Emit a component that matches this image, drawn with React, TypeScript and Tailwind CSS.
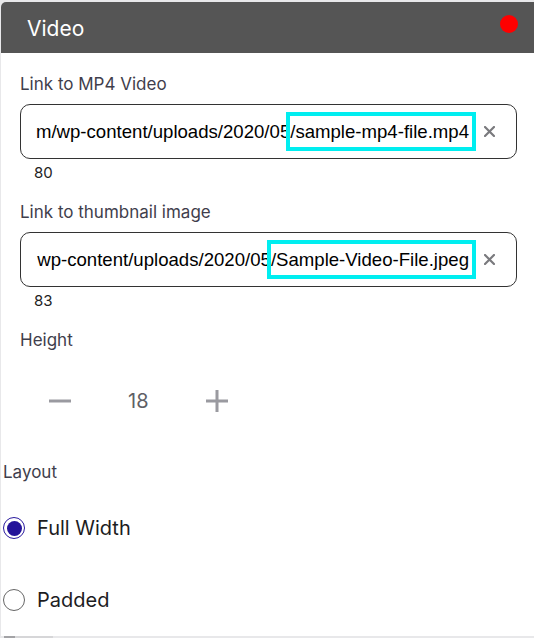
const ui = "font-['Inter','Noto_Sans',sans-serif]";
const mono = "font-['Liberation_Sans','Arial',sans-serif]";

function UrlField({ head, tail, count }: { head: string; tail: string; count: string }) {
  return (
    <>
      <div className="mt-[10px] h-[55px] border border-[#333] rounded-[10px] flex items-center pl-[13px] pr-[21px] bg-white">
        <div className={`flex-1 h-full overflow-hidden flex items-center justify-end whitespace-nowrap text-[18.6px] text-black ${mono}`}>
          <span className="leading-[31px]">{head}</span>
          <span className="relative leading-[31px] pr-[3px] mr-[4px] outline-4 outline-[#00eef0]">{tail}</span>
        </div>
        <svg width="11" height="11" viewBox="0 0 11 11" className="ml-[8px] shrink-0">
          <path d="M1 1L10 10M10 1L1 10" stroke="#7a7a7e" strokeWidth="2.2" strokeLinecap="round" />
        </svg>
      </div>
      <div className={`mt-[5px] pl-[14px] text-[15px] leading-[18px] text-[#222] ${ui}`}>{count}</div>
    </>
  );
}

function Radio({ label, checked }: { label: string; checked?: boolean }) {
  return (
    <label className="flex items-center gap-[12px] h-[30px] pl-[2px]">
      <span
        className={`w-[22px] h-[22px] rounded-full border-[1.5px] flex items-center justify-center bg-white ${
          checked ? "border-[#2a1a9e]" : "border-[#666]"
        }`}
      >
        {checked && <span className="w-[15px] h-[15px] rounded-full bg-[#24139a]" />}
      </span>
      <span className={`text-[20px] text-[#1d1d1f] ${ui}`}>{label}</span>
    </label>
  );
}

export default function App() {
  return (
    <div className="w-[534px] h-[638px] bg-[#e8e8ea] overflow-hidden flex flex-col">
      <div className="mt-[2px] ml-[1px] h-[634px] bg-white rounded-tl-[5px] overflow-hidden flex flex-col">
        <div className="h-[51px] shrink-0 bg-[#555555] flex justify-between pl-[26px] pr-[16px]">
          <div className={`pt-[15px] text-[21px] leading-[24px] text-white ${ui}`}>Video</div>
          <span className="mt-[13px] w-[18px] h-[18px] rounded-full bg-[#ff0000]" />
        </div>

        <div className="pl-[19px] pr-[17px] flex flex-col">
          <div className={`mt-[21px] text-[17px] leading-[20px] text-[#3f3e4c] ${ui}`}>Link to MP4 Video</div>
          <UrlField head="m/wp-content/uploads/2020/05" tail="/sample-mp4-file.mp4" count="80" />

          <div className={`mt-[20px] text-[17px] leading-[20px] text-[#3f3e4c] ${ui}`}>Link to thumbnail image</div>
          <UrlField head="wp-content/uploads/2020/05" tail="/Sample-Video-File.jpeg" count="83" />

          <div className={`mt-[20px] text-[17px] leading-[20px] text-[#3f3e4c] ${ui}`}>Height</div>

          <div className="mt-[36px] h-[30px] flex items-center gap-[57px] pl-[29px]">
            <svg width="22" height="22" viewBox="0 0 22 22">
              <path d="M0 11H22" stroke="#9a9aa0" strokeWidth="3" />
            </svg>
            <span className={`text-[20px] text-[#5f5f66] ${ui}`}>18</span>
            <svg width="22" height="22" viewBox="0 0 22 22">
              <path d="M0 11H22M11 0V22" stroke="#9a9aa0" strokeWidth="3" />
            </svg>
          </div>
        </div>

        <div className={`mt-[46px] pl-[2px] text-[17px] leading-[20px] text-[#3f3e4c] ${ui}`}>Layout</div>
        <div className="mt-[31px]">
          <Radio label="Full Width" checked />
        </div>
        <div className="mt-[42px]">
          <Radio label="Padded" />
        </div>
      </div>
      <div className="flex h-[2px] pl-[4px]">
        <div className="w-[11px] bg-[#a3a3a6]" />
        <div className="w-[38px] bg-[#d6d6d8]" />
      </div>
    </div>
  );
}
